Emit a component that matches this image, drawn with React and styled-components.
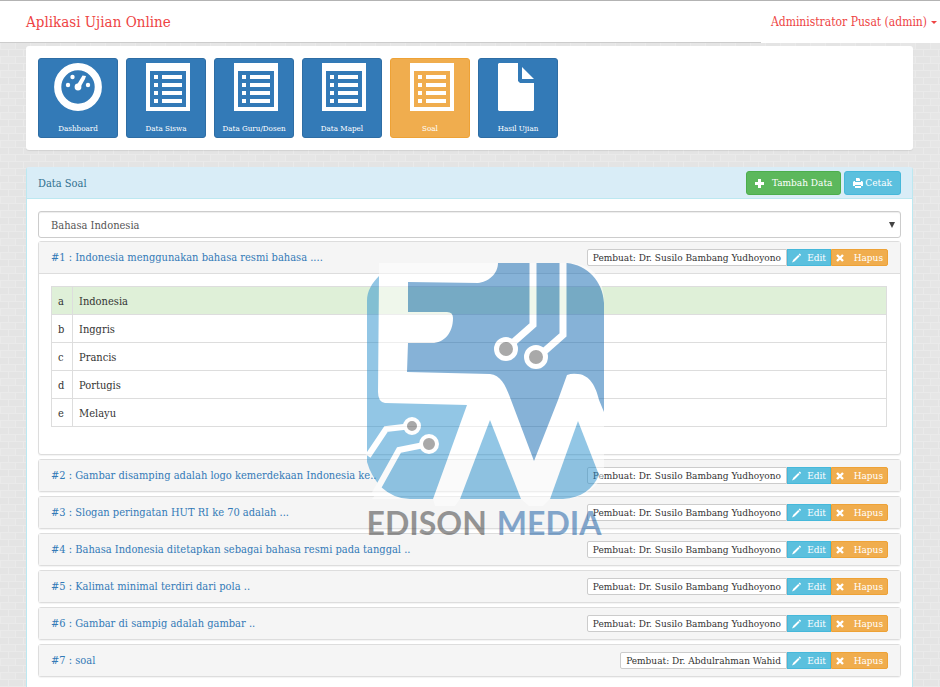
import React from "react";
import styled, { createGlobalStyle } from "styled-components";

const FONT = '"DejaVu Serif Condensed", "DejaVu Serif", serif';

const BRICKS = encodeURIComponent(
  '<svg xmlns="http://www.w3.org/2000/svg" width="30" height="14">' +
    '<rect width="30" height="14" fill="#e4e4e4"/>' +
    '<rect width="15" height="7" fill="#e6e6e6"/>' +
    '<path d="M0 .5H30M0 7.5H30M.5 0V7M15.5 0V7M8.5 7V14M23.5 7V14" stroke="#eaeaea"/>' +
    "</svg>"
);

const GlobalStyle = createGlobalStyle`
  * { box-sizing: border-box; }
  body {
    margin: 0;
    font-family: ${FONT};
    font-size: 11px;
    line-height: 16px;
    color: #333;
    background: #e5e5e5 url("data:image/svg+xml,${BRICKS}");
  }
  a { text-decoration: none; }
  button, select { font-family: inherit; }
`;

const Page = styled.div`
  min-height: 100vh;
  display: flex;
  flex-direction: column;
`;

const Header = styled.header`
  display: flex;
  justify-content: space-between;
  align-items: center;
  height: 43px;
  padding-left: 26px;
  background: #fff;
  border-top: 1px solid #b3b3b3;
  border-bottom: 1px solid #ccc;
`;

const Brand = styled.a`
  font-size: 15px;
  line-height: 20px;
  color: #e44;
`;

const UserArea = styled.div`
  display: flex;
  align-self: stretch;
  align-items: center;
  justify-content: flex-end;
  width: 179px;
  margin-bottom: -1px;
  padding-right: 3px;
  background: #fff;
`;

const UserButton = styled.button`
  display: flex;
  align-items: center;
  gap: 4px;
  padding: 0;
  border: 0;
  background: none;
  font-size: 12px;
  line-height: 20px;
  white-space: nowrap;
  color: #e44;
`;

const Caret = styled.span`
  border: 3px solid transparent;
  border-top-color: #e44;
  border-bottom-width: 0;
`;

const Main = styled.main`
  flex: 1;
  display: flex;
  flex-direction: column;
  gap: 17px;
  padding: 3px 27px 0 26px;
`;

const Menu = styled.nav`
  display: flex;
  flex-wrap: wrap;
  gap: 8px;
  padding: 12px;
  background: #fff;
  border-radius: 3px;
  box-shadow: 0 1px 1px rgba(0, 0, 0, 0.08);
`;

const Tile = styled.a`
  display: flex;
  flex-direction: column;
  align-items: center;
  justify-content: space-between;
  width: 80px;
  height: 80px;
  padding: 4px 0 2px;
  border: 1px solid ${(p) => (p.$active ? "#eea236" : "#2e6da4")};
  border-radius: 3px;
  background: ${(p) => (p.$active ? "#f0ad4e" : "#337ab7")};
  color: #fff;
  font-size: 8px;
  line-height: 12px;
  white-space: nowrap;
`;

const Panel = styled.section`
  position: relative;
  flex: 1;
  background: #fff;
  border: 1px solid #bce8f1;
  border-top-color: #d9edf7;
  border-bottom: 0;
  border-radius: 3px 3px 0 0;
`;

const PanelHead = styled.header`
  display: flex;
  justify-content: space-between;
  align-items: center;
  height: 31px;
  padding: 0 11px;
  background: #d9edf7;
  border-bottom: 1px solid #bce8f1;
`;

const PanelTitle = styled.h1`
  margin: 0;
  padding-top: 2px;
  font-size: 11px;
  font-weight: 400;
  color: #31708f;
`;

const Actions = styled.div`
  display: flex;
  gap: 3px;
`;

const ActionButton = styled.button`
  display: flex;
  align-items: center;
  gap: ${(p) => (p.$tone === "success" ? "8px" : "2px")};
  height: 24px;
  padding: 0 8px;
  border: 1px solid ${(p) => (p.$tone === "success" ? "#4cae4c" : "#46b8da")};
  border-radius: 3px;
  background: ${(p) => (p.$tone === "success" ? "#5cb85c" : "#5bc0de")};
  color: #fff;
  font-size: 10px;
  line-height: 16px;
`;

const PanelBody = styled.div`
  padding: 12px 11px 0;
`;

const SelectBox = styled.div`
  display: grid;
  align-items: center;
  margin-bottom: 3px;
`;

const Select = styled.select`
  grid-area: 1 / 1;
  width: 100%;
  height: 27px;
  padding: 1px 12px 0;
  appearance: none;
  border: 1px solid #ccc;
  border-radius: 3px;
  background: #fff;
  box-shadow: inset 0 1px 1px rgba(0, 0, 0, 0.075);
  color: #555;
  font-size: 11px;
`;

const SelectArrow = styled.span`
  grid-area: 1 / 1;
  justify-self: end;
  margin-right: 6px;
  pointer-events: none;
  border: 3px solid transparent;
  border-top: 6px solid #444;
  border-bottom-width: 0;
`;

const Questions = styled.div`
  display: flex;
  flex-direction: column;
  gap: 4px;
`;

const Question = styled.article`
  border: 1px solid #ddd;
  border-radius: 3px;
  background: #fff;
  box-shadow: 0 1px 1px rgba(0, 0, 0, 0.05);
`;

const QuestionHead = styled.div`
  display: flex;
  justify-content: space-between;
  align-items: center;
  height: 31px;
  padding: 0 12px;
  background: #f5f5f5;
`;

const QuestionLink = styled.a`
  color: #337ab7;
`;

const Group = styled.div`
  display: flex;
  height: 17px;
`;

const Tag = styled.span`
  display: flex;
  align-items: center;
  padding: 0 5px;
  border: 1px solid #ccc;
  border-radius: 2px 0 0 2px;
  background: #fff;
  font-size: 10px;
  line-height: 15px;
`;

const SmallButton = styled.button`
  display: flex;
  align-items: center;
  justify-content: space-between;
  gap: 6px;
  width: ${(p) => (p.$tone === "info" ? "44px" : "57px")};
  padding: 0 4px;
  border: 1px solid ${(p) => (p.$tone === "info" ? "#46b8da" : "#eea236")};
  border-radius: ${(p) => (p.$tone === "info" ? "0" : "0 2px 2px 0")};
  background: ${(p) => (p.$tone === "info" ? "#5bc0de" : "#f0ad4e")};
  color: #fff;
  font-size: 10px;
  line-height: 15px;
`;

const QuestionBody = styled.div`
  padding: 12px 13px 27px 12px;
  border-top: 1px solid #ddd;
`;

const Answers = styled.table`
  width: 100%;
  border-collapse: collapse;
`;

const Answer = styled.tr`
  background: ${(p) => (p.$correct ? "#dff0d8" : "#fff")};
`;

const Cell = styled.td`
  height: 28px;
  width: ${(p) => (p.$letter ? "21px" : "auto")};
  padding: 2px 6px 0;
  border: 1px solid #ddd;
`;

const Watermark = styled.div`
  position: absolute;
  left: calc(50% - 103px);
  top: 95px;
  width: 237px;
  opacity: 0.5;
  pointer-events: none;
`;

const LogoArt = styled.svg`
  display: block;
  overflow: visible;
`;

const Wordmark = styled.div`
  display: flex;
  gap: 10px;
  font-family: Lato, "Liberation Sans", sans-serif;
  font-size: 32px;
  font-weight: 700;
  line-height: 32px;
  white-space: nowrap;
`;

const Word = styled.span`
  color: ${(p) => (p.$blue ? "#0f57a0" : "#333")};
`;

const DashboardIcon = () => (
  <svg width="48" height="48" viewBox="0 0 48 48" fill="#fff" aria-hidden="true">
    <circle cx="24" cy="24" r="20.3" fill="none" stroke="#fff" strokeWidth="7.2" />
    <circle cx="14" cy="22" r="2.2" />
    <circle cx="18.5" cy="14" r="2.2" />
    <circle cx="34" cy="22" r="2.2" />
    <circle cx="24" cy="24" r="3.4" />
    <path d="M22.5 22.5L28.5 12.5L32 13L31 16L26.5 24z" />
  </svg>
);

const ListIcon = () => (
  <svg width="48" height="48" viewBox="-4 0 48 48" fill="#fff" aria-hidden="true">
    <path fillRule="evenodd" d="M0 0h44v48H0zM4 8v36h36V8z" />
    <path d="M8 12h4v4H8zM8 20h4v4H8zM8 28h4v4H8zM8 36h4v4H8zM16 12h20v4H16zM16 20h20v4H16zM16 28h20v4H16zM16 36h20v4H16z" />
  </svg>
);

const FileIcon = () => (
  <svg width="48" height="48" viewBox="0 0 48 48" fill="#fff" aria-hidden="true">
    <path d="M5 0h19v18l2 2h14v27l-1 1H5l-1-1V1zM28 4l12 12H28z" />
  </svg>
);

const PlusIcon = () => (
  <svg width="9" height="9" viewBox="0 0 9 9" fill="#fff" aria-hidden="true">
    <path d="M3 0h3v3h3v3H6v3H3V6H0V3h3z" />
  </svg>
);

const PrintIcon = () => (
  <svg width="10" height="10" viewBox="0 0 10 10" fill="#fff" aria-hidden="true">
    <path d="M3 0h3l1 1v2H3zM0 4l1-1h1v1h6V3h1l1 1v4H8V7H2v1H0zM2 8h6v2H2z" />
  </svg>
);

const PencilIcon = () => (
  <svg width="10" height="10" viewBox="0 0 10 10" fill="#fff" aria-hidden="true">
    <path d="M8.4 0L10 1.6L8.8 2.8L7.2 1.2zM6.8 1.7L8.3 3.2L3 8.6L0 10L1.4 7z" />
  </svg>
);

const CrossIcon = () => (
  <svg width="8" height="8" viewBox="0 0 8 8" aria-hidden="true">
    <path d="M1 1l6 6M7 1L1 7" stroke="#fff" strokeWidth="2.4" />
  </svg>
);

const Logo = () => (
  <LogoArt width="237" height="244" viewBox="0 0 237 244" aria-hidden="true">
    <path
      fill="#fff"
      d="M12 0H200Q237 0 237 40V212Q221 236 196 236H183L176 243H162L154 236H93L88 243H68L66 236H43L5 236L14 224L0 199V38L12 13Z"
    />
    <g fill="#278fcd">
      <path d="M12 13C5 20 0 28 0 38V199Q4 213 14 224Q27 236 43 236H66L100 142L18 140Q11 139 11 129Z" />
      <path d="M123 157L93 236H154Z" />
      <path d="M211 158L183 236H196C214 235 226 226 232 212Z" />
    </g>
    <path
      fill="#0f67b1"
      d="M131 0C131 11 121 19 111 20L41 19V49H80Q86 49 86 55C86 70 77 80 65 80H41L40 109L123 111C134 112 139 123 144 137L167 198L191 137L200 112Q205 110 211 111C223 112 229 124 232 137L237 149V40C236 18 220 2 200 0Z"
    />
    <g fill="none" stroke="#fff" strokeWidth="7">
      <path d="M166 0V62L142 83" />
      <path d="M196 0V72L172 93" />
      <path d="M45 163L19 166L1 193" strokeWidth="6" />
      <path d="M62 181L32 187L7 232" strokeWidth="6" />
    </g>
    <g fill="#555" stroke="#fff" strokeWidth="5">
      <circle cx="139" cy="86" r="9.5" />
      <circle cx="169" cy="94" r="9.5" />
      <circle cx="45" cy="163" r="7" strokeWidth="4" />
      <circle cx="62" cy="181" r="8" strokeWidth="4" />
    </g>
  </LogoArt>
);

const MENU = [
  { label: "Dashboard", Icon: DashboardIcon },
  { label: "Data Siswa", Icon: ListIcon },
  { label: "Data Guru/Dosen", Icon: ListIcon },
  { label: "Data Mapel", Icon: ListIcon },
  { label: "Soal", Icon: ListIcon, active: true },
  { label: "Hasil Ujian", Icon: FileIcon },
];

const SUSILO = "Dr. Susilo Bambang Yudhoyono";

const QUESTIONS = [
  {
    text: "Indonesia menggunakan bahasa resmi bahasa ....",
    author: SUSILO,
    answers: ["Indonesia", "Inggris", "Prancis", "Portugis", "Melayu"],
  },
  { text: "Gambar disamping adalah logo kemerdekaan Indonesia ke..", author: SUSILO },
  { text: "Slogan peringatan HUT RI ke 70 adalah ...", author: SUSILO },
  { text: "Bahasa Indonesia ditetapkan sebagai bahasa resmi pada tanggal ..", author: SUSILO },
  { text: "Kalimat minimal terdiri dari pola ..", author: SUSILO },
  { text: "Gambar di sampig adalah gambar ..", author: SUSILO },
  { text: "soal", author: "Dr. Abdulrahman Wahid" },
];

export default function App() {
  return (
    <Page>
      <GlobalStyle />
      <Header>
        <Brand href="#home">Aplikasi Ujian Online</Brand>
        <UserArea>
          <UserButton type="button">
            Administrator Pusat (admin)
            <Caret />
          </UserButton>
        </UserArea>
      </Header>
      <Main>
        <Menu>
          {MENU.map(({ label, Icon, active }) => (
            <Tile key={label} href="#menu" $active={active}>
              <Icon />
              <span>{label}</span>
            </Tile>
          ))}
        </Menu>
        <Panel>
          <PanelHead>
            <PanelTitle>Data Soal</PanelTitle>
            <Actions>
              <ActionButton type="button" $tone="success">
                <PlusIcon />
                Tambah Data
              </ActionButton>
              <ActionButton type="button" $tone="info">
                <PrintIcon />
                Cetak
              </ActionButton>
            </Actions>
          </PanelHead>
          <PanelBody>
            <SelectBox>
              <Select aria-label="Mata pelajaran" defaultValue="Bahasa Indonesia">
                <option>Bahasa Indonesia</option>
              </Select>
              <SelectArrow />
            </SelectBox>
            <Questions>
              {QUESTIONS.map((q, i) => (
                <Question key={q.text}>
                  <QuestionHead>
                    <QuestionLink href="#soal">{`#${i + 1} : ${q.text}`}</QuestionLink>
                    <Group>
                      <Tag>Pembuat: {q.author}</Tag>
                      <SmallButton type="button" $tone="info">
                        <PencilIcon />
                        Edit
                      </SmallButton>
                      <SmallButton type="button" $tone="warning">
                        <CrossIcon />
                        Hapus
                      </SmallButton>
                    </Group>
                  </QuestionHead>
                  {q.answers && (
                    <QuestionBody>
                      <Answers>
                        <tbody>
                          {q.answers.map((answer, n) => (
                            <Answer key={answer} $correct={n === 0}>
                              <Cell $letter>{"abcde"[n]}</Cell>
                              <Cell>{answer}</Cell>
                            </Answer>
                          ))}
                        </tbody>
                      </Answers>
                    </QuestionBody>
                  )}
                </Question>
              ))}
            </Questions>
          </PanelBody>
          <Watermark>
            <Logo />
            <Wordmark>
              <Word>EDISON</Word>
              <Word $blue>MEDIA</Word>
            </Wordmark>
          </Watermark>
        </Panel>
      </Main>
    </Page>
  );
}
